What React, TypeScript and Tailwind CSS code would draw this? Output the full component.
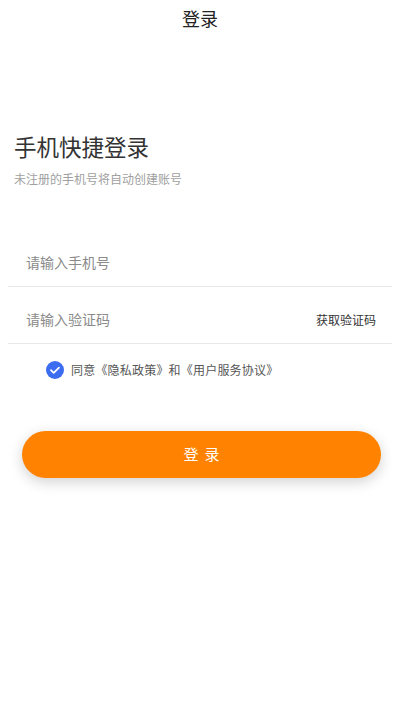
const font = { fontFamily: '"Noto Sans CJK SC", "Noto Sans", sans-serif' }

function CheckIcon() {
  return (
    <svg width="18" height="18" viewBox="0 0 18 18" className="shrink-0">
      <circle cx="9" cy="9" r="9" fill="#3c6cf0" />
      <path d="M5 9.2l2.7 2.6L13 6.6" fill="none" stroke="#fff" strokeWidth="1.8" strokeLinecap="round" strokeLinejoin="round" />
    </svg>
  )
}

export default function App() {
  return (
    <div className="min-h-[711px] w-[400px] bg-white" style={font}>
      <header className="flex h-[36px] items-center justify-center">
        <h1 className="text-[18px] leading-none text-[#222]">登录</h1>
      </header>

      <section className="mt-[97px] px-[14px]">
        <h2 className="text-[22.5px] leading-[26px] text-[#333]">手机快捷登录</h2>
        <p className="mt-[12px] text-[12px] leading-[16px] text-[#a0a0a0]">未注册的手机号将自动创建账号</p>
      </section>

      <form className="mx-[8px] mt-[52px]" onSubmit={(e) => e.preventDefault()}>
        <div className="flex h-[48px] items-center border-b border-[#e8e8e8] px-[18px]">
          <input
            className="w-full bg-transparent text-[14px] text-[#333] outline-none placeholder:text-[#8a8a8a]"
            placeholder="请输入手机号"
          />
        </div>
        <div className="mt-[9px] flex h-[48px] items-center border-b border-[#e8e8e8] pl-[18px] pr-[16px]">
          <input
            className="min-w-0 flex-1 bg-transparent text-[14px] text-[#333] outline-none placeholder:text-[#8a8a8a]"
            placeholder="请输入验证码"
          />
          <button type="button" className="shrink-0 text-[12px] text-[#333]">获取验证码</button>
        </div>

        <label className="mt-[17px] flex items-center gap-[7px] pl-[38px]">
          <CheckIcon />
          <span className="text-[12px] leading-none tracking-[0.2px] text-[#555]">同意《隐私政策》和《用户服务协议》</span>
        </label>

        <div className="mt-[52px] pl-[14px] pr-[11px]">
          <button
            type="submit"
            className="flex h-[47px] w-full items-center justify-center rounded-full bg-[#ff8200] pl-[6px] text-[15px] tracking-[6px] text-white shadow-[0_4px_14px_rgba(0,0,0,0.18)]"
          >
            登录
          </button>
        </div>
      </form>
    </div>
  )
}
